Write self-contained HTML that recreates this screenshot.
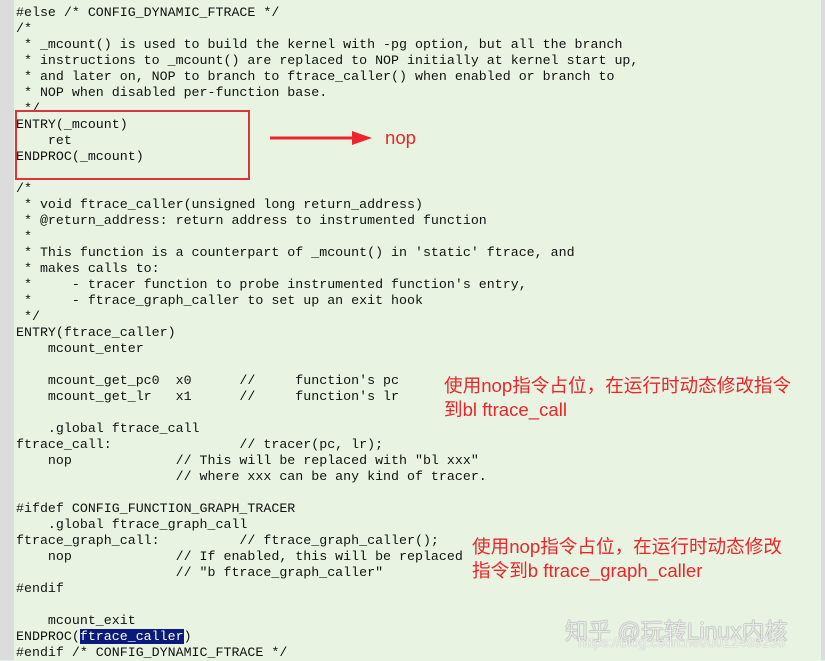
<!DOCTYPE html>
<html><head><meta charset="utf-8"><style>
html,body{margin:0;padding:0}
body{width:825px;height:660px;overflow:hidden;background:#e8f4e1;position:relative}
.l{position:absolute;left:0;top:0;width:14px;height:660px;background:#dcdcdc}
.r{position:absolute;right:0;top:0;width:4px;height:660px;background:#dcdcdc}
pre{position:absolute;left:16px;top:5px;margin:0;font-family:"Liberation Mono",monospace;font-size:13.3px;line-height:16px;color:#111;letter-spacing:0}
.hl{background:#0a1a7a;color:#fff}
.box{position:absolute;left:15px;top:110px;width:231px;height:66px;border:2px solid #d8363b}
.an{position:absolute;font-family:"Liberation Sans","Noto Sans CJK SC",sans-serif;color:#e8262b;font-size:18.6px;line-height:24px}
.wm{position:absolute;left:565px;top:612px;font-family:"Liberation Sans","Noto Sans CJK SC",sans-serif;font-size:23px;color:rgba(255,255,255,.8);text-shadow:0 0 1px #888,0 0 1px #888}
.wm2{position:absolute;left:578px;top:634px;font-family:"Liberation Sans",sans-serif;font-size:14px;color:rgba(255,255,255,.8);text-shadow:0 0 1px #999}
</style></head><body>
<div class="l"></div><div class="r"></div>
<pre>#else /* CONFIG_DYNAMIC_FTRACE */
/*
 * _mcount() is used to build the kernel with -pg option, but all the branch
 * instructions to _mcount() are replaced to NOP initially at kernel start up,
 * and later on, NOP to branch to ftrace_caller() when enabled or branch to
 * NOP when disabled per-function base.
 */
ENTRY(_mcount)
    ret
ENDPROC(_mcount)

/*
 * void ftrace_caller(unsigned long return_address)
 * @return_address: return address to instrumented function
 *
 * This function is a counterpart of _mcount() in 'static' ftrace, and
 * makes calls to:
 *     - tracer function to probe instrumented function's entry,
 *     - ftrace_graph_caller to set up an exit hook
 */
ENTRY(ftrace_caller)
    mcount_enter

    mcount_get_pc0  x0      //     function's pc
    mcount_get_lr   x1      //     function's lr

    .global ftrace_call
ftrace_call:                // tracer(pc, lr);
    nop             // This will be replaced with "bl xxx"
                    // where xxx can be any kind of tracer.

#ifdef CONFIG_FUNCTION_GRAPH_TRACER
    .global ftrace_graph_call
ftrace_graph_call:          // ftrace_graph_caller();
    nop             // If enabled, this will be replaced
                    // "b ftrace_graph_caller"
#endif

    mcount_exit
ENDPROC(<span class="hl">ftrace_caller</span>)
#endif /* CONFIG_DYNAMIC_FTRACE */</pre>
<div class="box"></div>
<svg style="position:absolute;left:268px;top:130px" width="106" height="16"><line x1="2" y1="8" x2="88" y2="8" stroke="#e8262b" stroke-width="3"/><polygon points="84,1 104,8 84,15" fill="#e8262b"/></svg>
<div class="an" style="left:385px;top:126px">nop</div>
<div class="an" style="left:444px;top:374px">使用nop指令占位，在运行时动态修改指令<br>到bl ftrace_call</div>
<div class="an" style="left:472px;top:535px">使用nop指令占位，在运行时动态修改<br>指令到b ftrace_graph_caller</div>
<div class="wm">知乎 @玩转Linux内核</div>
<div class="wm2">https://blog.csdn.net/u012489236</div>
</body></html>
